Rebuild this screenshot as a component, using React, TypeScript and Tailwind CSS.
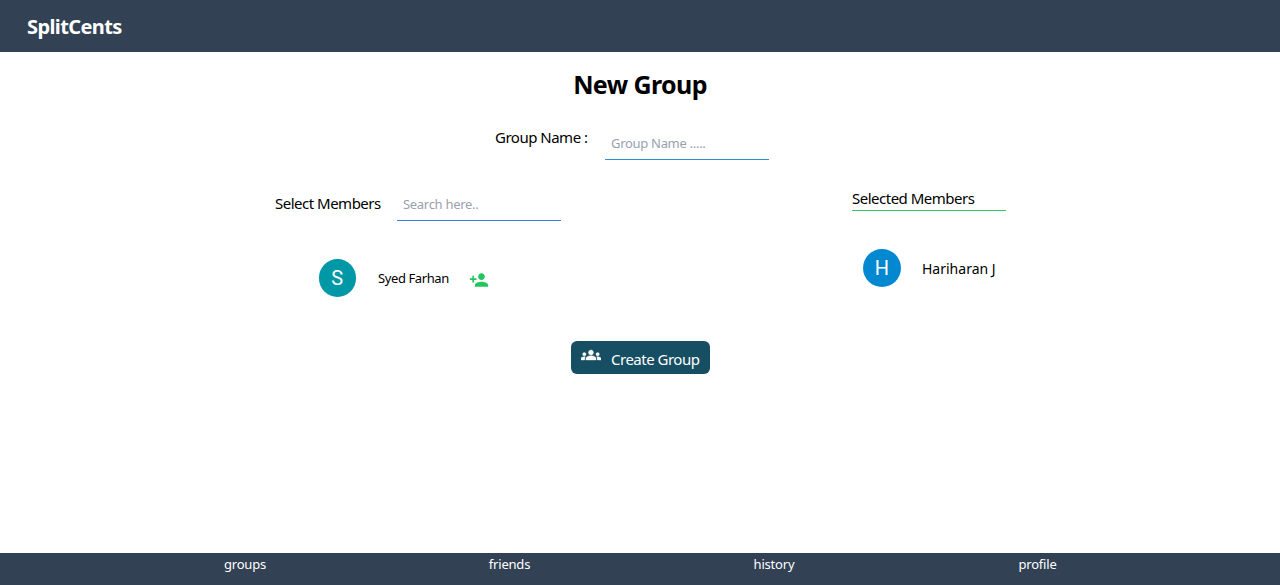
import { MdPersonAdd } from "react-icons/md";

function GroupsIcon({ className }: { className: string }) {
  return (
    <svg viewBox="0 0 24 24" fill="currentColor" stroke="currentColor" strokeWidth="0.45" className={className}>
      <path d="M12 12.75c1.63 0 3.07.39 4.24.9 1.08.48 1.76 1.56 1.76 2.73V18H6v-1.61c0-1.18.68-2.26 1.76-2.73 1.17-.52 2.61-.91 4.24-.91z" />
      <path d="M4 13c1.1 0 2-.9 2-2s-.9-2-2-2-2 .9-2 2 .9 2 2 2zm1.13 1.1A6.95 6.95 0 0 0 4 14c-.99 0-1.93.21-2.78.58A2.01 2.01 0 0 0 0 16.43V18h4.5v-1.61c0-.83.23-1.61.63-2.29z" />
      <path d="M20 13c1.1 0 2-.9 2-2s-.9-2-2-2-2 .9-2 2 .9 2 2 2zm4 3.43c0-.81-.48-1.53-1.22-1.85A6.95 6.95 0 0 0 20 14c-.39 0-.76.04-1.13.1.4.68.63 1.46.63 2.29V18H24v-1.57z" />
      <path d="M12 6c1.66 0 3 1.34 3 3s-1.34 3-3 3-3-1.34-3-3 1.34-3 3-3z" />
    </svg>
  );
}

function Avatar({ letter, color }: { letter: string; color: string }) {
  return (
    <div
      className={`flex shrink-0 items-center justify-center rounded-full font-[Roboto,sans-serif] text-[20px] leading-none text-white ${color}`}
    >
      {letter}
    </div>
  );
}

function Field({ placeholder, border }: { placeholder: string; border: string }) {
  return (
    <div className={`flex w-[164px] border-b ${border}`}>
      <input
        className="w-full bg-transparent pt-px pl-1.5 text-[13px] tracking-[-0.3px] outline-none placeholder:text-gray-400"
        placeholder={placeholder}
      />
    </div>
  );
}

const label = "shrink-0 whitespace-nowrap text-[15px] leading-5 tracking-[-0.5px]";

export default function App() {
  return (
    <div className="flex h-[585px] w-full flex-col bg-white font-['Noto_Sans','Open_Sans',sans-serif] text-black">
      <header className="flex h-[52px] shrink-0 items-center bg-[#334155] pl-[27px]">
        <h1 className="pt-px text-[20px] leading-7 font-bold tracking-[-0.6px] text-white">SplitCents</h1>
      </header>

      <main className="flex flex-1 flex-col">
        <h2 className="mt-3.5 text-center text-[25px] leading-9 font-bold tracking-[-0.6px]">New Group</h2>

        <div className="mt-[25px] flex h-[33px] pl-[495px]">
          <span className={`${label} w-[110px]`}>Group Name :</span>
          <Field placeholder="Group Name ....." border="border-[#2f8fd0]" />
        </div>

        <div className="mt-7 flex">
          <section className="w-[852px]">
            <div className="flex h-[33px] pl-[275px]">
              <span className={`${label} mt-[5px] w-[122px]`}>Select Members</span>
              <Field placeholder="Search here.." border="border-[#3b7dd8]" />
            </div>
            <div className="mt-[38px] flex h-[38px] items-center pl-[318.5px]">
              <Avatar letter="S" color="size-[37.5px] bg-[#0097a7]" />
              <span className="ml-[22px] w-[91px] whitespace-nowrap text-[13px] leading-5 tracking-[-0.4px]">
                Syed Farhan
              </span>
              <MdPersonAdd className="mt-1 size-5 text-[#22c55e]" />
            </div>
          </section>

          <section className="w-[154px]">
            <div className={`${label} border-b border-[#34c76a] pb-0.5`}>Selected Members</div>
            <div className="mt-[38px] flex items-center pl-[11px]">
              <Avatar letter="H" color="size-[38px] bg-[#0288d1]" />
              <span className="mt-px ml-[21px] whitespace-nowrap text-[14px] leading-5">Hariharan J</span>
            </div>
          </section>
        </div>

        <button className="mt-11 ml-[571px] flex h-[33px] w-[139px] rounded-md bg-[#164e63] pl-2.5 text-white">
          <GroupsIcon className="mt-[3.5px] size-5 shrink-0" />
          <span className="mt-2 ml-2.5 whitespace-nowrap text-[15px] leading-5 tracking-[-0.5px]">Create Group</span>
        </button>
      </main>

      <footer className="flex h-8 shrink-0 bg-[#334155] pl-[113px] text-center text-[13px] leading-[22px] tracking-[-0.2px] text-white">
        <span className="w-[264px]">groups</span>
        <span className="w-[265px]">friends</span>
        <span className="w-[264px]">history</span>
        <span className="w-[263px]">profile</span>
      </footer>
    </div>
  );
}
